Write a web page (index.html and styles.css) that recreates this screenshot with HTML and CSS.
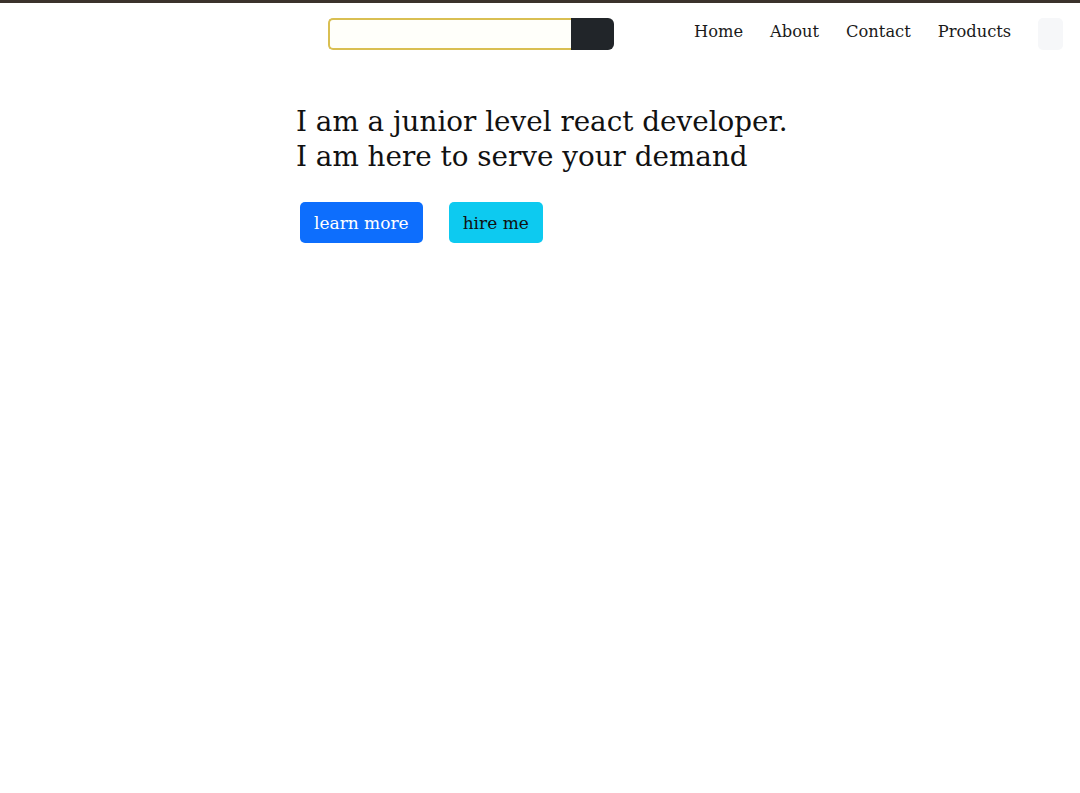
FILE: index.html
```html
<!DOCTYPE html>
<html>
<head>
<meta charset="utf-8">
<link rel="stylesheet" href="styles.css">
</head>
<body>
<header class="topbar">
  <form class="search">
    <input class="search-input" type="text">
    <button class="search-btn" type="button"></button>
  </form>
  <nav class="nav">
    <a class="nav-link" href="#">Home</a>
    <a class="nav-link" href="#">About</a>
    <a class="nav-link" href="#">Contact</a>
    <a class="nav-link" href="#">Products</a>
  </nav>
  <div class="nav-box"></div>
</header>
<main class="hero">
  <h1 class="hero-title">I am a junior level react developer.<br>I am here to serve your demand</h1>
  <div class="hero-actions">
    <button class="btn btn-primary" type="button">learn more</button>
    <button class="btn btn-info" type="button">hire me</button>
  </div>
</main>
</body>
</html>
```
FILE: styles.css
```css
html, body {
  margin: 0;
  padding: 0;
  background: #ffffff;
}
body {
  font-family: "DejaVu Serif", serif;
  color: #212529;
  border-top: 3px solid #3b322c;
  min-height: 790px;
}
.topbar {
  display: flex;
  align-items: center;
  padding: 15px 16px 0 328px;
  height: 32px;
}
.search {
  display: flex;
  height: 32px;
}
.search-input {
  width: 243px;
  height: 32px;
  box-sizing: border-box;
  border: 2px solid #d9bf52;
  border-right: none;
  border-radius: 5px 0 0 5px;
  background: #fffffa;
  margin: 0;
  padding: 0;
  outline: none;
}
.search-btn {
  width: 43px;
  height: 32px;
  border: none;
  margin: 0;
  background: #212529;
  border-radius: 0 6px 6px 0;
}
.nav {
  display: flex;
  gap: 27px;
  margin-left: 80px;
  position: relative;
  top: -3px;
}
.nav-link {
  font-size: 16.3px;
  color: #1a1a1a;
  text-decoration: none;
}
.nav-box {
  width: 25px;
  height: 32px;
  background: #f6f7f9;
  border-radius: 5px;
  margin-left: 27px;
}
.hero {
  padding: 54px 0 0 296px;
}
.hero-title {
  margin: 0;
  font-weight: normal;
  font-size: 27.8px;
  line-height: 35px;
  color: #111;
}
.hero-actions {
  display: flex;
  gap: 26px;
  margin: 28px 0 0 4px;
}
.btn {
  font-family: "DejaVu Serif", serif;
  font-size: 17px;
  height: 41px;
  padding: 0 14px;
  border: none;
  border-radius: 5px;
}
.btn-primary {
  background: #0d6efd;
  color: #fff;
}
.btn-info {
  background: #0dcaf0;
  color: #111;
}
```
